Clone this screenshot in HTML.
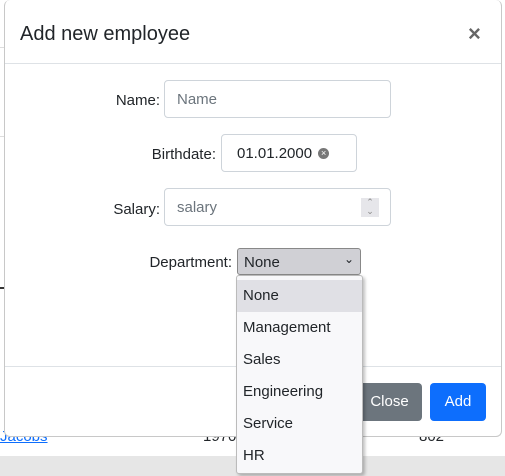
<!DOCTYPE html>
<html><head><style>
*{box-sizing:border-box}
body{margin:0;width:505px;height:476px;overflow:hidden;background:#fff;font-family:"Liberation Sans",sans-serif;color:#212529;position:relative;font-size:15px}
.abs{position:absolute}
.modal{left:4px;top:0;width:498px;height:437px;background:#fff;border:1px solid #c8c8c8;border-radius:6px;border-top:none}
.inp{position:absolute;border:1px solid #ced4da;border-radius:4px;background:#fff;font-size:15px;color:#6c757d;padding-left:12px;display:flex;align-items:center}
.lbl{position:absolute;font-size:15px;text-align:right}
.dd div{height:32px;line-height:32px;padding-left:6px;font-size:15px}
</style></head><body>
<div class="abs" style="left:0;top:456px;width:505px;height:20px;background:#e6e6e6"></div>
<div class="abs" style="left:0;top:428px;color:#0d6efd;text-decoration:underline;font-size:15px">Jacobs</div>
<div class="abs" style="left:203px;top:428px;font-size:15px">1970</div>
<div class="abs" style="left:419px;top:428px;font-size:15px">802</div>
<div class="abs" style="left:0;top:47px;width:4px;height:1px;background:#ddd"></div>
<div class="abs" style="left:0;top:136px;width:4px;height:1px;background:#ddd"></div>
<div class="abs" style="left:0;top:287px;width:4px;height:2px;background:#333"></div>
<div class="modal abs">
 <div class="abs" style="left:15px;top:23px;font-size:20px">Add new employee</div>
 <div class="abs" style="left:463px;top:21px;font-size:22px;color:#666;font-weight:bold">×</div>
 <div class="abs" style="left:0;top:63px;width:496px;height:1px;background:#dee2e6"></div>
 <div class="abs" style="left:0;top:366px;width:496px;height:1px;background:#dee2e6"></div>
</div>
<div class="lbl" style="right:345px;top:92px">Name:</div>
<div class="inp" style="left:164px;top:80px;width:227px;height:38px">Name</div>
<div class="lbl" style="right:289px;top:146px">Birthdate:</div>
<div class="inp" style="left:221px;top:134px;width:136px;height:38px;color:#212529;padding-left:15px">01.01.2000 <span style="display:inline-block;width:11px;height:11px;border-radius:50%;background:#777;color:#fff;font-size:9px;line-height:11px;text-align:center;margin-left:6px">×</span></div>
<div class="lbl" style="right:345px;top:201px">Salary:</div>
<div class="inp" style="left:164px;top:188px;width:227px;height:38px">salary<span style="position:absolute;left:196px;top:9px;width:18px;height:19px;background:#e6e6ea;color:#888;font-size:9px;text-align:center;line-height:9px">⌃<br>⌄</span></div>
<div class="lbl" style="right:273px;top:254px">Department:</div>
<div class="abs" style="left:237px;top:248px;width:124px;height:27px;background:#d0d0d5;border:1px solid #888;border-radius:3px;font-size:15px;padding:5px 0 0 6px">None<span style="position:absolute;right:6px;top:3px;font-size:12px">⌄</span></div>
<div class="abs" style="left:357px;top:383px;width:65px;height:38px;background:#6c757d;color:#fff;border-radius:4px;font-size:15px;text-align:center;line-height:38px">Close</div>
<div class="abs" style="left:430px;top:383px;width:56px;height:38px;background:#0d6efd;color:#fff;border-radius:4px;font-size:15px;text-align:center;line-height:38px">Add</div>
<div class="abs dd" style="left:236px;top:275px;width:127px;height:199px;background:#f8f8fa;border:1px solid #bbb;border-radius:3px;box-shadow:2px 2px 3px rgba(0,0,0,.25);padding-top:4px">
 <div style="background:#e0e0e5">None</div><div>Management</div><div>Sales</div><div>Engineering</div><div>Service</div><div>HR</div>
</div>
</body></html>
